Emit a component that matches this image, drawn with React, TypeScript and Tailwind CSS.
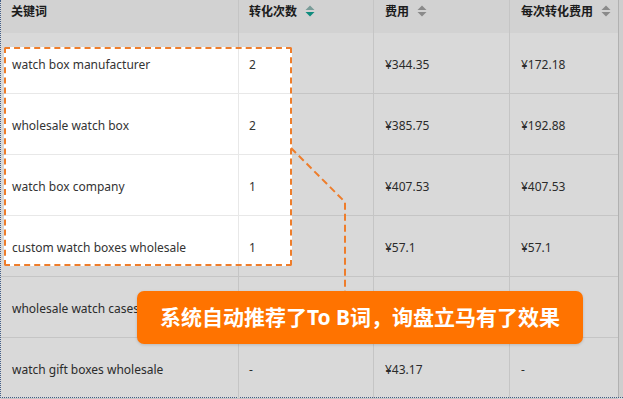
import React from 'react';

type Row = { keyword: string; conv: string; cost: string; perConv: string };

// row 5's figures sit under the callout, so they stay empty
const ROWS: Row[] = [
  { keyword: 'watch box manufacturer', conv: '2', cost: '¥344.35', perConv: '¥172.18' },
  { keyword: 'wholesale watch box', conv: '2', cost: '¥385.75', perConv: '¥192.88' },
  { keyword: 'watch box company', conv: '1', cost: '¥407.53', perConv: '¥407.53' },
  { keyword: 'custom watch boxes wholesale', conv: '1', cost: '¥57.1', perConv: '¥57.1' },
  { keyword: 'wholesale watch cases', conv: '', cost: '', perConv: '' },
  { keyword: 'watch gift boxes wholesale', conv: '-', cost: '¥43.17', perConv: '-' },
];

function SortIcon({ active = false }: { active?: boolean }) {
  return (
    <svg width="10" height="12" viewBox="0 0 10 12" className="ml-2 mt-[2px] shrink-0">
      <path d="M5 0.5 L9.5 5 H0.5 Z" fill={active ? '#8fb8b3' : '#a3a3a3'} />
      <path d="M5 11.5 L9.5 7 H0.5 Z" fill={active ? '#12a594' : '#a3a3a3'} />
    </svg>
  );
}

const cols = 'grid grid-cols-[238px_135px_136px_1fr]';
const cell = 'flex items-center border-r border-[#e8e8e8] pt-[3px] last:border-r-0';

export default function App() {
  return (
    <div
      className="relative h-[399px] w-[623px] overflow-hidden bg-white text-[#333]"
      style={{ fontFamily: '"Noto Sans", "Noto Sans CJK SC", sans-serif' }}
    >
      <div className="flex h-[398px] border-b border-l border-dotted border-[#4f6f9f]">
        <div className="w-[617px]">
          {/* header */}
          <div className={`${cols} h-[33px] bg-[#f7f7f7] text-[12px] font-bold text-[#222]`}>
            <div className="flex items-start border-r border-[#e8e8e8] pl-[10px] pt-[3px]">关键词</div>
            <div className="flex items-start border-r border-[#e8e8e8] pl-[10px] pt-[3px]">
              转化次数
              <SortIcon active />
            </div>
            <div className="flex items-start border-r border-[#e8e8e8] pl-[11px] pt-[3px]">
              费用
              <SortIcon />
            </div>
            <div className="flex items-start pl-[11px] pt-[3px]">
              每次转化费用
              <SortIcon />
            </div>
          </div>
          {/* body */}
          {ROWS.map((r) => (
            <div key={r.keyword} className={`${cols} h-[61px] border-b border-[#e8e8e8] text-[12px]`}>
              <div className={`${cell} pl-[11px]`}>{r.keyword}</div>
              <div className={`${cell} pl-[10px]`}>{r.conv}</div>
              <div className={`${cell} pl-[11px]`}>{r.cost}</div>
              <div className={`${cell} pl-[11px]`}>{r.perConv}</div>
            </div>
          ))}
        </div>
        <div className="flex-1 border-l border-[#d0d0d0] bg-[#f2f2f2]" />
      </div>

      {/* spotlight: dims everything except the highlighted rows */}
      <div className="absolute left-[4px] top-[47px] h-[219px] w-[288px] rounded-[2px] border-2 border-dashed border-[#ee7d2b] shadow-[0_0_0_2000px_rgba(0,0,0,0.15)]" />

      {/* connector */}
      <svg className="absolute left-0 top-0" width="623" height="399">
        <polyline
          points="291,148 345,202 345,291"
          fill="none"
          stroke="#ee7d2b"
          strokeWidth="2"
          strokeDasharray="7 4"
        />
      </svg>

      {/* callout */}
      <div className="absolute left-[137px] top-[291px] flex h-[53px] w-[446px] items-center justify-center rounded-[7px] bg-[#ff7300] text-[21px] font-bold text-white shadow-[0_1px_3px_rgba(0,0,0,0.15)]">
        系统自动推荐了To B词，询盘立马有了效果
      </div>
    </div>
  );
}
